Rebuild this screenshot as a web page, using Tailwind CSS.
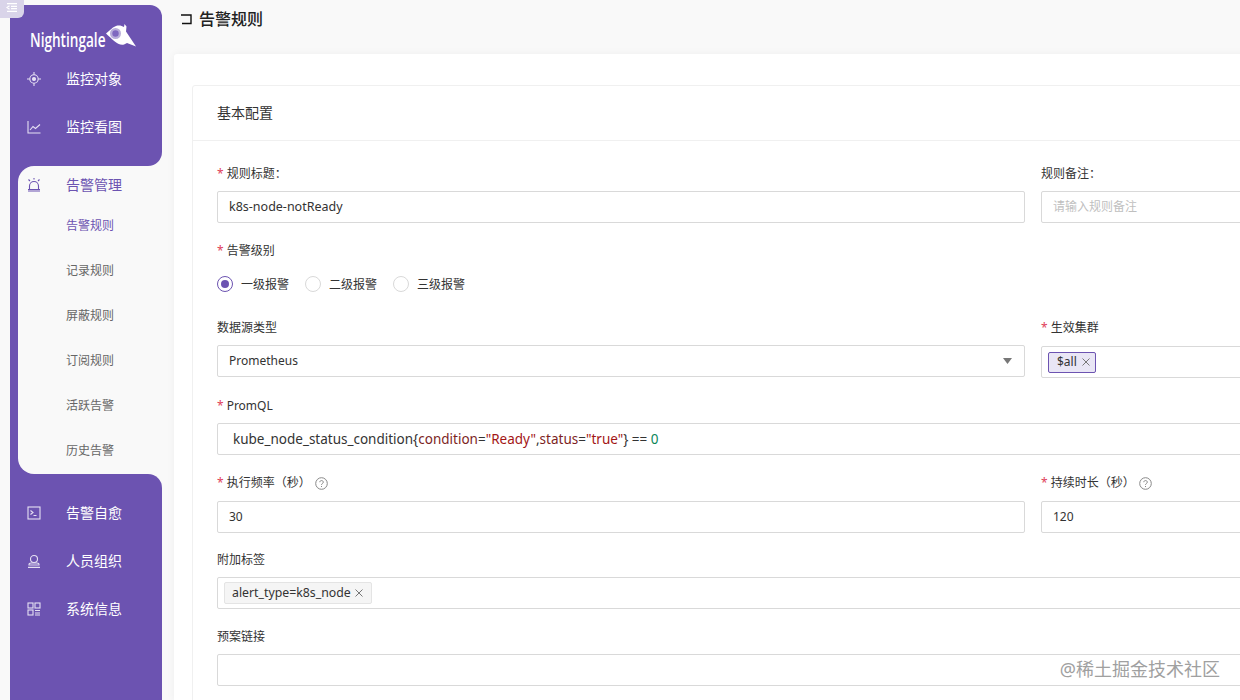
<!DOCTYPE html>
<html lang="zh-CN">
<head>
  <meta charset="UTF-8" />
  <title>告警规则</title>
  <script src="https://cdn.jsdelivr.net/npm/@tailwindcss/browser@4"></script>
</head>
<body class="bg-[#f9f9f9] text-[#333] text-xs font-['Noto_Sans','Noto_Sans_CJK_SC',sans-serif]">
  <div class="relative flex h-[700px] w-[1240px] overflow-hidden">

    <!-- menu toggle -->
    <div class="absolute left-0 top-0 z-10 flex h-[18px] w-[24px] items-start justify-center rounded-br-[6px] bg-[#d9d4e9] pt-[3px]">
      <svg width="12" height="9" viewBox="0 0 12 9" fill="none" stroke="#fff" stroke-width="1.300"><path d="M1 .7h10M5 3.300h6M5 5.700h6M1 8.300h10M3.500 2.800 1 4.500l2.500 1.700"/></svg>
    </div>

    <!-- sidebar -->
    <aside class="ml-[10px] mt-[5px] flex w-[152px] shrink-0 flex-col text-sm">
      <div class="h-[161px] rounded-t-[12px] rounded-br-[14px] bg-[#6c53b1] text-white">
        <div class="flex h-[50px] items-start pl-[20px] pt-[19px]">
          <span class="w-[74px] origin-left scale-x-[0.68] whitespace-nowrap font-['Open_Sans',sans-serif] text-[20px] font-semibold leading-[32px]">Nightingale</span>
          <svg class="ml-[1px]" width="32" height="27" viewBox="0 0 32 27">
            <path d="M1 9.500 8 3.500C12 .5 16 1 19 3l.5-3 2 2.500-.5 5 10 15-9-3.500-3 1.500C13 22 7 15 1 9.500Z" fill="#fff"/>
            <circle cx="10.500" cy="9.500" r="5.500" fill="#b9aedb"/>
            <circle cx="10.500" cy="9.500" r="3.200" fill="#7f68c0"/>
          </svg>
        </div>
        <div class="flex h-[48px] items-center">
          <svg class="ml-[17px] mr-[25px]" width="14" height="14" viewBox="0 0 14 14" fill="none" stroke="#e6e1f3" stroke-width="1.100"><circle cx="7" cy="7" r="4.200"/><circle cx="7" cy="7" r="1.500" fill="#e6e1f3"/><path d="M7 0v2.800M7 11.200V14M0 7h2.800M11.200 7H14"/></svg>
          <span>监控对象</span>
        </div>
        <div class="flex h-[48px] items-center">
          <svg class="ml-[17px] mr-[25px]" width="14" height="14" viewBox="0 0 14 14" fill="none" stroke="#e6e1f3" stroke-width="1.100"><path d="M1 1v12h12.500M3 10l3-3.500 2.500 2L13 4.500"/></svg>
          <span>监控看图</span>
        </div>
      </div>

      <div class="h-[308px] bg-[#6c53b1] pl-[8px]">
        <div class="h-full rounded-l-[16px] bg-[#f9f9f9]">
          <div class="flex h-[37px] items-center text-[#6c53b1]">
            <svg class="ml-[9px] mr-[25px]" width="14" height="14" viewBox="0 0 14 14" fill="none" stroke="#6c53b1" stroke-width="1.100"><path d="M2.500 11V8a4.500 4.500 0 0 1 9 0v3M1 13h12M1 11.500h12M7 0v1.500M1.500 1.500l1.500 1.500M12.500 1.500 11 3"/></svg>
            <span>告警管理</span>
          </div>
          <div class="pl-[48px] text-xs leading-[45px] text-[#666]">
            <div class="text-[#6c53b1]">告警规则</div>
            <div>记录规则</div>
            <div>屏蔽规则</div>
            <div>订阅规则</div>
            <div>活跃告警</div>
            <div>历史告警</div>
          </div>
        </div>
      </div>

      <div class="flex-1 rounded-tr-[14px] bg-[#6c53b1] pt-[15px] text-white">
        <div class="flex h-[48px] items-center">
          <svg class="ml-[17px] mr-[25px]" width="14" height="14" viewBox="0 0 14 14" fill="none" stroke="#e6e1f3" stroke-width="1.100"><rect x="1" y="1" width="12" height="12"/><path d="m3.500 4.500 2.500 2-2.500 2M6.500 9.500h3"/></svg>
          <span>告警自愈</span>
        </div>
        <div class="flex h-[48px] items-center">
          <svg class="ml-[17px] mr-[25px]" width="14" height="14" viewBox="0 0 14 14" fill="none" stroke="#e6e1f3" stroke-width="1.100"><circle cx="7" cy="5" r="3.500"/><path d="M2 10c0-.7 1-1 2-1h6c1 0 2 .3 2 1v1H2ZM1 13.400h12"/></svg>
          <span>人员组织</span>
        </div>
        <div class="flex h-[48px] items-center">
          <svg class="ml-[17px] mr-[25px]" width="14" height="14" viewBox="0 0 14 14" fill="none" stroke="#e6e1f3" stroke-width="1.100"><rect x="1" y="1" width="5" height="5"/><rect x="8" y="1" width="5" height="5"/><rect x="1" y="8" width="5" height="5"/><path d="M8 8.500h5M8 11h5M8 13h5"/></svg>
          <span>系统信息</span>
        </div>
      </div>
    </aside>

    <!-- main -->
    <main class="ml-[12px] w-[1200px] shrink-0">
      <header class="flex h-[54px] items-start pt-[7px]">
        <svg class="ml-[6px] mt-[6px] mr-[7px]" width="12" height="12" viewBox="0 0 12 12" fill="none" stroke="#111" stroke-width="1.400"><path d="M1 2h10v8.500H2"/></svg>
        <h1 class="text-base font-medium leading-[24px] text-[#222]">告警规则</h1>
      </header>

      <div class="h-[646px] rounded-tl-[3px] bg-white pl-[18px] pt-[31px] shadow-[0_0_8px_rgba(0,0,0,0.05)]">
        <section class="h-[700px] rounded-tl-[3px] border border-[#f0f0f0] bg-white">
          <div class="flex h-[55px] items-center border-b border-[#f0f0f0] pl-[24px] text-sm">基本配置</div>

          <div class="pl-[24px] pt-[24px]">
            <!-- title / note -->
            <div class="grid grid-cols-[808px_1fr] gap-x-4">
              <div>
                <label class="flex h-[18px] items-center"><span class="mr-[3px] text-[#e0405a]">*</span>规则标题：</label>
                <div class="mt-[8px] flex h-[32px] items-center rounded-[2px] border border-[#d9d9d9] px-[11px] text-[12.500px]">k8s-node-notReady</div>
              </div>
              <div>
                <label class="flex h-[18px] items-center">规则备注：</label>
                <div class="mt-[8px] flex h-[32px] items-center rounded-[2px] border border-[#d9d9d9] px-[11px] text-[#bfbfbf]">请输入规则备注</div>
              </div>
            </div>

            <!-- level -->
            <label class="mt-[19px] flex h-[18px] items-center"><span class="mr-[3px] text-[#e0405a]">*</span>告警级别</label>
            <div class="mt-[15px] flex h-[44px] items-start">
              <span class="mt-[1px] flex h-[16px] w-[16px] items-center justify-center rounded-full border border-[#6c53b1]"><span class="h-[8px] w-[8px] rounded-full bg-[#6c53b1]"></span></span>
              <span class="ml-[8px] leading-[20px]">一级报警</span>
              <span class="ml-[16px] mt-[1px] h-[16px] w-[16px] rounded-full border border-[#d9d9d9]"></span>
              <span class="ml-[8px] leading-[20px]">二级报警</span>
              <span class="ml-[16px] mt-[1px] h-[16px] w-[16px] rounded-full border border-[#d9d9d9]"></span>
              <span class="ml-[8px] leading-[20px]">三级报警</span>
            </div>

            <!-- datasource / cluster -->
            <div class="grid grid-cols-[808px_1fr] gap-x-4">
              <div>
                <label class="flex h-[18px] items-center">数据源类型</label>
                <div class="mt-[8px] flex h-[32px] items-center justify-between rounded-[2px] border border-[#d9d9d9] pl-[11px] pr-[12px]">
                  <span>Prometheus</span>
                  <svg width="9" height="6" viewBox="0 0 9 6"><path d="M0 0h9L4.500 6Z" fill="#777"/></svg>
                </div>
              </div>
              <div>
                <label class="flex h-[18px] items-center"><span class="mr-[3px] text-[#e0405a]">*</span>生效集群</label>
                <div class="mt-[9px] flex h-[32px] items-center rounded-[2px] border border-[#d9d9d9] pl-[6px]">
                  <span class="flex h-[21px] items-center rounded-[2px] border border-[#6c53b1] bg-[#e9e6f5] pl-[8px] pr-[5px]">$all
                    <svg class="ml-[5px]" width="8" height="8" viewBox="0 0 8 8" stroke="#777" fill="none"><path d="m.5.500 7 7M7.500.500l-7 7"/></svg>
                  </span>
                </div>
              </div>
            </div>

            <!-- promql -->
            <label class="mt-[19px] flex h-[18px] items-center"><span class="mr-[3px] text-[#e0405a]">*</span>PromQL</label>
            <div class="mt-[8px] flex h-[32px] items-center whitespace-pre rounded-[2px] border border-[#d9d9d9] pl-[15px] text-[13.500px]">kube_node_status_condition{<span class="text-[#7d1f1f]">condition</span>=<span class="text-[#a31515]">"Ready"</span>,<span class="text-[#7d1f1f]">status</span>=<span class="text-[#a31515]">"true"</span>} == <span class="text-[#098658]">0</span></div>

            <!-- frequency / duration -->
            <div class="mt-[18px] grid grid-cols-[808px_1fr] gap-x-4">
              <div>
                <label class="flex h-[20px] items-center"><span class="mr-[3px] text-[#e0405a]">*</span>执行频率（秒）
                  <svg class="ml-[4px]" width="13" height="13" viewBox="0 0 13 13" fill="none" stroke="#888"><circle cx="6.500" cy="6.500" r="5.800"/><path d="M4.800 5.200c0-2.200 3.500-2.200 3.500 0 0 1.300-1.800 1.300-1.800 2.600M6.500 9v1"/></svg>
                </label>
                <div class="mt-[8px] flex h-[32px] items-center rounded-[2px] border border-[#d9d9d9] px-[11px]">30</div>
              </div>
              <div>
                <label class="flex h-[20px] items-center"><span class="mr-[3px] text-[#e0405a]">*</span>持续时长（秒）
                  <svg class="ml-[4px]" width="13" height="13" viewBox="0 0 13 13" fill="none" stroke="#888"><circle cx="6.500" cy="6.500" r="5.800"/><path d="M4.800 5.200c0-2.200 3.500-2.200 3.500 0 0 1.300-1.800 1.300-1.800 2.600M6.500 9v1"/></svg>
                </label>
                <div class="mt-[8px] flex h-[32px] items-center rounded-[2px] border border-[#d9d9d9] px-[11px]">120</div>
              </div>
            </div>

            <!-- tags -->
            <label class="mt-[18px] flex h-[18px] items-center">附加标签</label>
            <div class="mt-[8px] flex h-[32px] items-center rounded-[2px] border border-[#d9d9d9] pl-[6px]">
              <span class="flex h-[22px] items-center rounded-[2px] border border-[#e4e4e4] bg-[#f5f5f5] pl-[7px] pr-[8px] text-[12.300px]">alert_type=k8s_node
                <svg class="ml-[4px]" width="8" height="8" viewBox="0 0 8 8" stroke="#777" fill="none"><path d="m.5.500 7 7M7.500.500l-7 7"/></svg>
              </span>
            </div>

            <!-- runbook -->
            <label class="mt-[19px] flex h-[18px] items-center">预案链接</label>
            <div class="mt-[8px] h-[32px] rounded-[2px] border border-[#d9d9d9]"></div>
          </div>
        </section>
      </div>
    </main>

    <!-- watermark -->
    <div class="absolute bottom-[18px] right-[20px] text-lg leading-[26px] text-[#a0a0a0]">@稀土掘金技术社区</div>
  </div>
</body>
</html>
